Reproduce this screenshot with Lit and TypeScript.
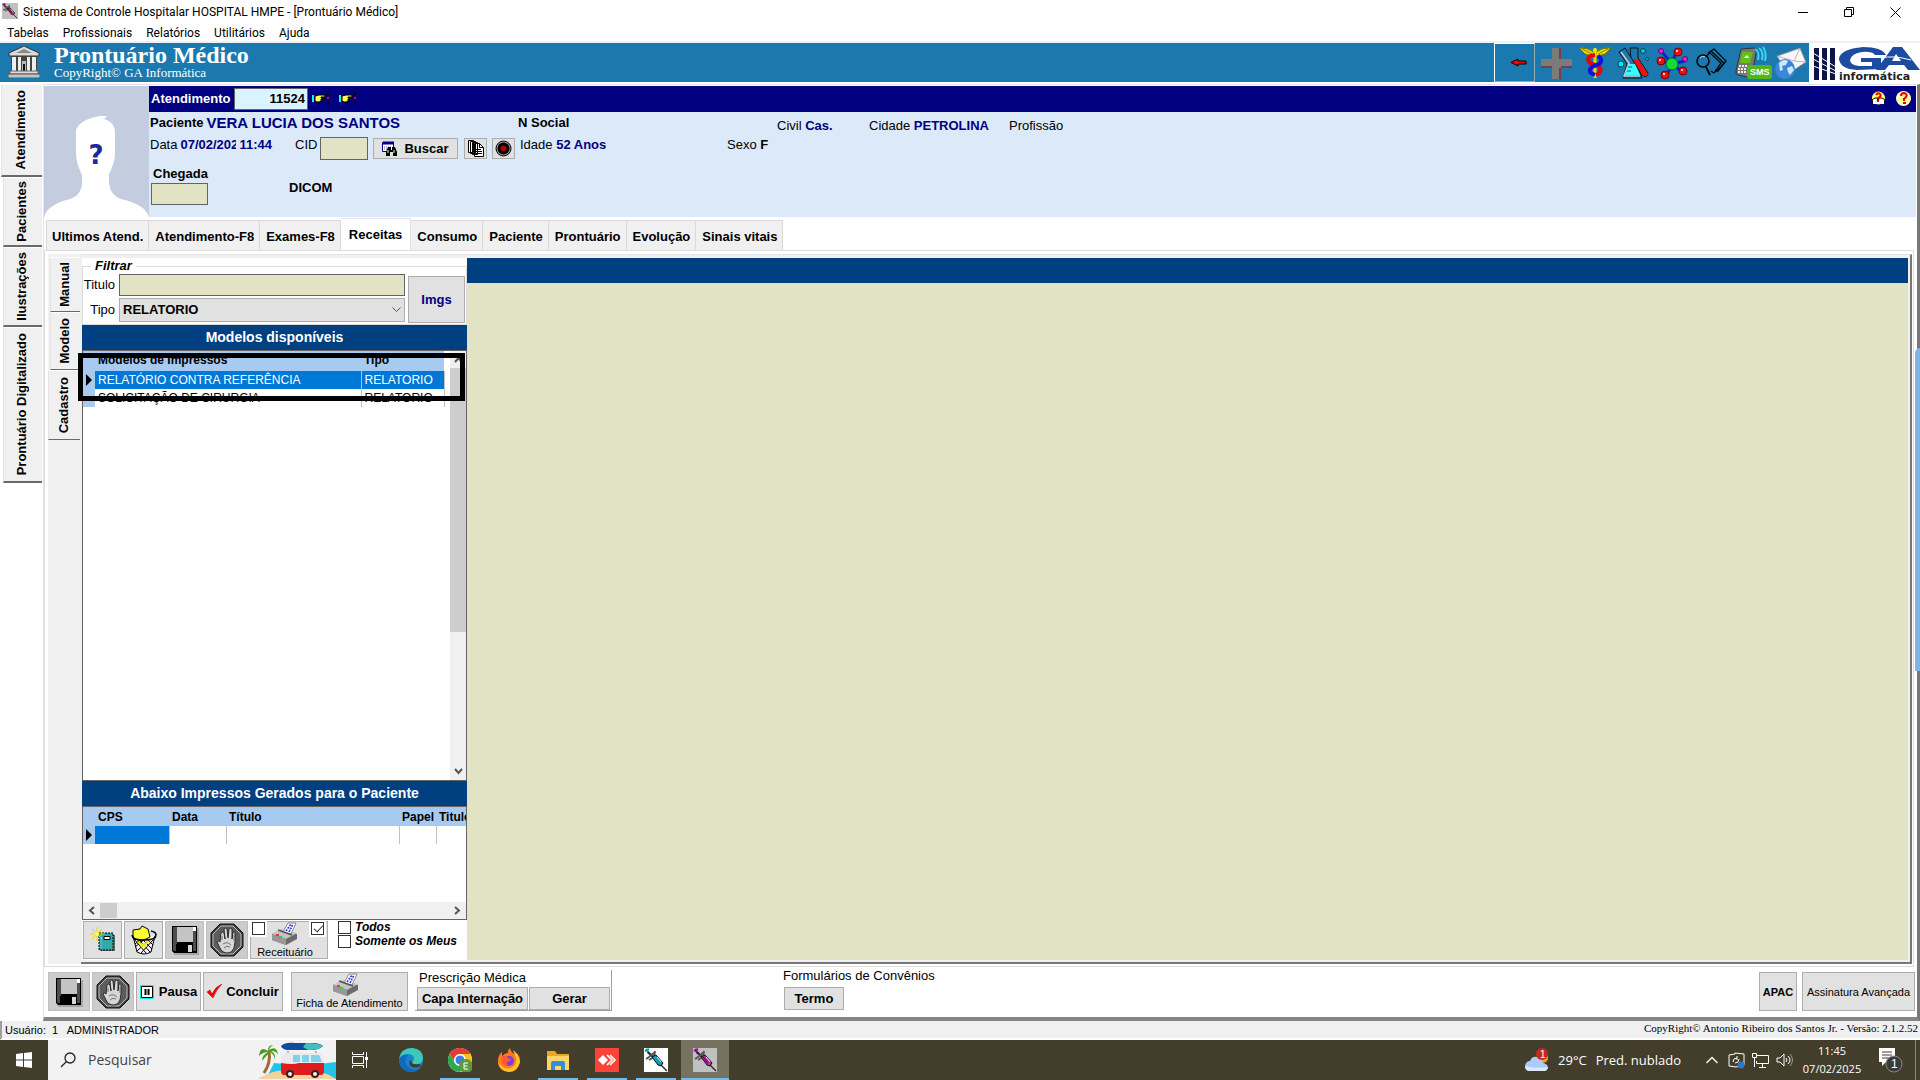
import { LitElement, html, css, svg } from "lit";
import { customElement, state } from "lit/decorators.js";
import { classMap } from "lit/directives/class-map.js";

const syringe = (a: string, b: string, bg: string) => html`<svg class="fill" viewBox="0 0 24 24" aria-hidden="true">
  <rect width="24" height="24" fill=${bg} />
  <path d="M1 3l4-2M2 1l3 5" stroke=${a} stroke-width="2" />
  <path d="M4 4l5 5" stroke="#222" stroke-width="2" />
  <path d="M2 11l3-2 6-5M11 3l-1 6-5 3" stroke="#555" stroke-width="2" fill="none" />
  <path d="M8 9l4-2 7 8-2 3-3-1z" fill=${b} stroke="#111" />
  <path d="M10 9l5 6" stroke=${a} stroke-width="2" />
  <path d="M13 9l4 5" stroke="#e8f4ff" />
  <path d="M17 17l6 6" stroke="#222" stroke-width="1.3" />
</svg>`;

const floppy = html`<svg width="28" height="30" viewBox="0 0 28 30" aria-hidden="true">
  <path d="M3 3h25v27H3z" fill="#a5a5a5" />
  <path d="M1 1h25v27H3l-2-2z" fill="#000" />
  <path d="M2 2h4v24H3l-1-1zM22 6h3v20h-3z" fill="#4d4d4d" />
  <path d="M6 2h16v15H6z" fill="#c4c4c4" /><path d="M22 2h3v4h-3z" fill="#fff" />
  <path d="M5 19h17v9H5z" fill="#000" /><path d="M17 20h4v7h-4z" fill="#d8d8d8" />
</svg>`;

const stopHand = html`<svg width="34" height="34" viewBox="0 0 34 34" aria-hidden="true">
  <path d="M10 1h14l9 9v14l-9 9H10l-9-9V10z" fill="#3d3d3d" stroke="#111" />
  <path d="M11 3h12l8 8v12l-8 8H11l-8-8V11z" fill="#5c5c5c" stroke="#bdbdbd" />
  <path d="M10 19l1-9q1-2 3 0l1 6-1-10q2-2 3 0l1 9 1-9q2-2 3 0v10l1-7q2-1 2 1v9l-1 6q-2 5-6 5-6 0-8-5l-3-6q1-2 3 0z" fill="#d6d6d6" stroke="#2b2b2b" />
  <path d="M13 21q4-3 8 1M14 25q3-3 6-1M12 13v4M24 12v6" stroke="#777" fill="none" />
</svg>`;

const printer = html`<svg class="prn" width="28" height="24" viewBox="0 0 28 24" aria-hidden="true">
  <path d="M1 12l10-4 15 4v5l-11 6-14-5z" fill="#6b6b6b" />
  <path d="M1 12l9-5 16 4-11 6z" fill="#c4c4c4" /><path d="M1 12l14 5v6L1 18z" fill="#989898" />
  <path d="M12 10L17 1h8l-5 11z" fill="#fff" stroke="#888" /><path d="M15 9l5-7M18 10l4-8" stroke="#2b35d8" stroke-width="1.6" stroke-dasharray="2 1" />
  <path d="M7 8l14 5" stroke="#555" stroke-width="1.5" />
  <path d="M5 13h3" stroke="#e33" stroke-width="2" /><path d="M8 15h3" stroke="#3c3" stroke-width="2" />
</svg>`;

const hand = html`<svg width="17" height="13" viewBox="0 0 17 13" aria-hidden="true">
  <path d="M0 3h2v7H0z" fill="#0ff" />
  <path d="M3 4l4-1h6v2H9v1h2v1H9v1h1v1H8v1H5L3 9z" fill="#ff5" stroke="#000" />
  <path d="M15 0h2v3h-2zM15 9h2v3h-2z" fill="#000" /><path d="M15 5h2v2h-2z" fill="#f00" />
</svg>`;

const bank = html`<svg width="32" height="32" viewBox="0 0 32 32" aria-hidden="true">
  <path d="M16 0l15 7v3H1V7z" fill="#d9d9d9" stroke="#333" /><path d="M8 7l8-4 8 4z" fill="#888" />
  <path d="M3 10h26v16H3z" fill="#444" />
  <path d="M4 11h4v14H4zM10 11h3v14h-3zM19 11h3v14h-3zM24 11h4v14h-4z" fill="#eee" />
  <path d="M14 15h4v10h-4z" fill="#b9b9b9" /><path d="M15 18h2v7h-2z" fill="#111" />
  <path d="M2 25h28v3H2z" fill="#ddd" stroke="#666" /><path d="M0 28h32v4H0z" fill="#c4c4c4" stroke="#555" />
</svg>`;

const tools: Array<[string, unknown]> = [
  ["Emergência", svg`<path d="M12 1h9v11h11v9H21v11h-9V21H1v-9h11z" fill="#7b7b7b"/><path d="M20 1v11M20 21v11M1 20h11M21 20h11" stroke="#7c0000"/>`],
  ["Medicina", svg`<path d="M15 9Q9 8 6 7L0 1q8-1 15 4zM17 9q6-1 9-2l6-6q-8-1-15 4z" fill="#e8e000" stroke="#776c00"/><path d="M3 2l10 5M29 2l-10 5" stroke="#887e00"/><path d="M16 3v28" stroke="#e8d800" stroke-width="3"/><circle cx="16" cy="3" r="2" fill="#ffe800"/>
    <path d="M16 8q-9 1-6 7 1 2 7 3 6 2 4 7-1 2-4 3" fill="none" stroke="#e00" stroke-width="4"/><path d="M19 9q6 4 1 8l-7 3q-4 3-1 6l4 2" fill="none" stroke="#11d" stroke-width="4"/>`],
  ["Laboratório", svg`<circle cx="3" cy="17" r="3" fill="#0ee" stroke="#045"/><circle cx="25" cy="4" r="2.5" fill="#0cc" stroke="#045"/><circle cx="29" cy="12" r="1.5" fill="#0cc" stroke="#045"/>
    <path d="M12 1h8v10l10 15q0 5-5 3L13 12z" fill="#1c79af" stroke="#111"/><path d="M13 13l7-1 10 15q-1 3-5 2z" fill="#e11"/>
    <path d="M1 5l6-4 14 22 3 8H5l4-14z" fill="#1c79af" stroke="#111"/><path d="M3 5l8 11-5 13h16" stroke="#ccc" stroke-width="1.5" fill="none"/><path d="M11 17h6l5 11H7z" fill="#3ff"/><path d="M10 20h4M9 24h4" stroke="#067"/>`],
  ["Exames", svg`<path d="M5 5l10 12M19 6l-4 10M4 14l12 3M15 17l13-3M15 18l-6 11M16 18l11 8" stroke="#12c" stroke-width="3"/><circle cx="15" cy="17" r="6" fill="#1d3" stroke="#063"/>
    <g fill="#e11" stroke="#700"><circle cx="4" cy="14" r="4"/><circle cx="21" cy="5" r="4"/><circle cx="8" cy="28" r="4"/><circle cx="26" cy="24" r="4"/></g><g fill="#e2c" stroke="#607"><circle cx="4" cy="4" r="2.5"/><circle cx="28" cy="12" r="2.5"/></g><g fill="#fff"><circle cx="3" cy="13" r="1"/><circle cx="20" cy="4" r="1"/><circle cx="7" cy="27" r="1"/><circle cx="25" cy="23" r="1"/></g>`],
  ["Pesquisar", svg`<circle cx="7" cy="14" r="6" fill="none" stroke="#000" stroke-width="1.5"/><path d="M10 20l4 8" stroke="#000" stroke-width="2"/><path d="M4 11q2-3 5-1" stroke="#cde" fill="none"/><path d="M12 6l6-4 12 12-8 10-3-1M10 9l4-3 11 10-7 10-3-2M15 4l13 12-8 9" fill="none" stroke="#000" stroke-width="1.2"/>`],
  ["SMS", svg`<path d="M6 2l13-1q3 0 2 5l-4 22q-1 3-5 2L3 28q-3-1-2-4z" fill="#777" stroke="#333"/><path d="M7 5h11l-3 11H5z" fill="#5dc417"/><path d="M9 11l3-3 2 3z" fill="#fff"/><path d="M4 19h9M3 22h9M3 25h8" stroke="#eee" stroke-width="2" stroke-dasharray="2 1"/><path d="M20 2q5 3 3 11M24 1q5 4 3 12M28 0q4 5 2 14" stroke="#35d7ee" stroke-width="2" fill="none"/><rect x="12" y="18" width="25" height="14" rx="3" fill="#53b51c"/><text x="15" y="28" font-family="Liberation Sans" font-size="9" font-weight="bold" fill="#fff">SMS</text>`],
  ["E-mail", svg`<path d="M3 9L26 1l6 14-18 12z" fill="#f7f7fa" stroke="#888"/><path d="M3 9l17 5 6-13M20 14l12 1" stroke="#b5b5c0" fill="none"/><circle cx="11" cy="22" r="10" fill="#3a86d8"/><path d="M5 16q4-5 9-2l-2 4-4 1 1 4-3 1zM13 21l5-2 2 4-4 5-2-3z" fill="#cfe6fa"/>`],
];

const gaLogo = html`<svg class="logo" width="111" height="39" viewBox="0 0 111 39" role="img" aria-label="GA informática">
  <rect width="111" height="39" fill="#fff" />
  <path d="M5 5h5v32H5zM13 5h5v32h-5zM21 5h5v32h-5z" fill="#0c1546" />
  <path d="M4 10l23 14M4 16l23 12M4 23l23 8" stroke="#fff" />
  <path d="M77 12Q73 4 54 4 31 6 30 16q1 10 18 11l24-1V15H52v4h11v4H50q-9-1-9-6 2-7 12-8 10-1 13 3z" fill="#1c4ba0" />
  <path d="M67 27L84 4h9l18 23H99l-4-5H80l-4 5zM83 18h9l-5-7z" fill="#1c4ba0" /><path d="M72 15q12-3 30 2" stroke="#fff" fill="none" />
  <text x="30" y="37" font-family="DejaVu Sans" font-size="11" font-weight="bold" fill="#222">informática</text>
</svg>`;

@customElement("app-root")
export class AppRoot extends LitElement {
  @state() private tab = "Receitas";

  static styles = css`
    :host { display: flex; flex-direction: column; min-height: 100vh; background: #fff; color: #000; font: 13px/16px "Liberation Sans", Arial, sans-serif; overflow: hidden; position: relative; }
    * { box-sizing: border-box; }
    svg { display: block; flex: none; }
    button, input, select { font: inherit; color: inherit; margin: 0; border-radius: 0; }
    button { background: #e1e1e1; border: 1px solid #adadad; padding: 0; display: flex; align-items: center; justify-content: center; white-space: nowrap; }
    .fill { width: 100%; height: 100%; }
    .ui { font-family: "Open Sans", "Noto Sans", sans-serif; font-size: 12px; }
    .rb { font-family: Roboto, "Open Sans", sans-serif; font-size: 12px; }
    .titlebar { display: flex; align-items: center; height: 24px; padding: 0 2px; gap: 5px; }
    .titlebar .app { width: 16px; height: 16px; margin-bottom: 3px; }
    .titlebar h1 { font: inherit; margin: 0; flex: 1; }
    .win { display: flex; }
    .win button { background: none; border: 0; width: 46px; height: 22px; }
    .menu { display: flex; height: 19px; border-bottom: 2px solid #f0f0f0; padding-left: 7px; gap: 14px; line-height: 18px; }
    .menu a { color: #000; text-decoration: none; }
    .band { display: flex; height: 39px; background: #1c79af; color: #fff; font-family: "Liberation Serif", serif; }
    .band .bank { padding: 3px 14px 0 8px; }
    .names { flex: 1; }
    .names h2 { margin: 0; font-size: 24px; line-height: 24px; font-weight: bold; }
    .names p { margin: 0; font-size: 13px; line-height: 12px; }
    .tools { display: flex; gap: 7px; align-items: center; padding-right: 3px; }
    .tools button { background: none; border: 0; width: 32px; height: 39px; }
    .tools svg { overflow: visible; }
    .tools .back { width: 41px; border: 1px solid #fff; border-right-color: #9aa; border-bottom-color: #9aa; margin-right: -2px; padding-left: 8px; }
    .work { flex: 1; display: flex; min-height: 0; }
    .side { width: 43px; padding: 2px 1px 0 1px; display: flex; flex-direction: column; align-items: flex-end; }
    .vt { background: #f0f0f0; border: 0 solid #808080; border-bottom: 2px solid #696969; border-left: 1px solid #e3e3e3; border-top: 1px solid #fff; font-weight: bold; width: 39px; padding-right: 2px; }
    .vt span { writing-mode: vertical-rl; transform: rotate(180deg); }
    .side .vt:first-child { width: 41px; }
    .h92 { height: 93px; } .h70 { height: 70px; } .h80 { height: 80px; } .h156 { height: 156px; }
    .main { flex: 1; min-width: 0; display: flex; flex-direction: column; margin-top: 2px; padding: 1px 1px 0 0; border-top: 1px solid #e3e3e3; border-left: 1px solid #e3e3e3; border-right: 3px solid #777; border-bottom: 4px solid #848484; }
    .patient { display: flex; height: 131px; }
    .info { flex: 1; background: #dce9f9; }
    .navy { height: 26px; background: #000080; color: #fff; display: flex; align-items: center; font-weight: bold; padding: 0 5px 1px 2px; }
    .navy label { width: 83px; }
    .navy input { width: 74px; height: 22px; border: 1px solid #646464; background: #d9f3ff; color: #000; text-align: right; font-weight: bold; padding: 0 2px; margin-right: 4px; }
    .navy button { background: none; border: 0; width: 17px; height: 20px; margin-right: 10px; }
    .navy .sp { flex: 1; }
    .navy .help { width: 15px; }
    .navy .help:last-child { margin-right: 0; }
    .line { display: flex; padding-left: 1px; }
    .l1 { height: 25px; padding-top: 3px; }
    .l2 { height: 27px; }
    .l1 .low { padding-top: 3px; }
    .blue { color: #000080; font-weight: bold; }
    .w368 { width: 368px; display: flex; gap: 3px; } .w259 { width: 259px; } .w92 { width: 92px; } .w140 { width: 140px; } .w145 { width: 145px; display: flex; gap: 3px; } .w207 { width: 207px; }
    .name { font-size: 15px; }
    .b { font-weight: bold; }
    .date { width: 56px; overflow: hidden; white-space: nowrap; }
    .txt { background: #e2e3c5; border: 1px solid #646464; }
    .cidl { width: 25px; }
    .cid { width: 48px; height: 23px; margin-right: 5px; }
    .buscar { width: 85px; height: 21px; gap: 6px; font-weight: bold; margin: 1px 6px 0 0; }
    .mini { width: 23px; height: 21px; margin: 1px 5px 0 0; }
    .l3 { gap: 81px; padding: 1px 0 0 2px; }
    .cheg { display: flex; flex-direction: column; font-weight: bold; }
    .cheg label { padding-left: 2px; line-height: 18px; }
    .cheg input { width: 57px; height: 22px; }
    .dicom { padding-top: 15px; font-weight: bold; }
    .tabs { display: flex; align-items: flex-end; height: 33px; padding-left: 2px; }
    .tabs button { background: #f0f0f0; border: 1px solid #d9d9d9; border-left-width: 0; border-bottom: 0; height: 30px; padding: 2px 5px 0 6px; font-weight: bold; }
    .tabs button:first-child { border-left-width: 1px; padding-left: 5px; }
    .tabs button.on { background: #fff; height: 33px; padding: 0 8px; margin-bottom: -1px; border-color: #e3e3e3; }
    .page { flex: 1; display: flex; border: 1px solid #dcdcdc; margin: 0 2px 1px 0; padding: 3px 1px 2px 3px; min-height: 0; }
    .strip { width: 33px; background: #f0f0f0; padding: 3px 1px 0; display: flex; flex-direction: column; align-items: flex-end; }
    .strip .vt { width: 30px; border-bottom-width: 1px; }
    .strip .vt:last-child { width: 32px; }
    .h55 { height: 55px; } .h58 { height: 58px; }
    .inner { flex: 1; display: flex; background: #f0f0f0; border-top: 1px solid #e3e3e3; border-right: 2px solid #777; border-bottom: 2px solid #777; padding: 3px 2px 2px 1px; min-height: 0; }
    .left { width: 385px; background: #fff; display: flex; flex-direction: column; }
    fieldset { margin: 0; padding: 0; border: 1px solid #dcdcdc; display: block; min-width: 0; }
    legend { margin-left: 8px; padding: 0 4px; font-weight: bold; font-style: italic; }
    .filter { display: flex; gap: 3px; padding-bottom: 1px; }
    .fields { display: grid; grid-template-columns: 36px 1fr; grid-template-rows: 22px 24px; row-gap: 2px; width: 322px; align-items: center; }
    .fields label { text-align: right; padding-right: 4px; }
    .fields .txt { height: 22px; width: 100%; }
    .sel { position: relative; }
    .sel select { appearance: none; width: 100%; height: 24px; background: #e1e1e1; border: 1px solid #adadad; font-weight: bold; padding: 0 3px; display: block; }
    .sel svg { position: absolute; right: 4px; top: 9px; pointer-events: none; }
    .imgs { width: 57px; height: 47px; margin-top: 2px; font-weight: bold; color: #000080; }
    .cap { background: #004080; color: #fff; font-weight: bold; text-align: center; line-height: 25px; height: 25px; margin: 0; font-size: 14px; }
    .grid { position: relative; border: 1px solid #646464; display: flex; }
    .g1 { flex: 1; }
    .g2 { height: 114px; flex-direction: column; overflow: hidden; }
    table { border-collapse: collapse; table-layout: fixed; }
    .g1 table { width: 361px; align-self: flex-start; }
    .g2 table { width: 419px; flex: none; }
    th, td { padding: 0 0 0 3px; height: 18px; text-align: left; white-space: nowrap; overflow: hidden; line-height: 16px; font-size: 12px; border-right: 1px solid #c0c0c0; }
    thead th, tbody th { background: #a6caf0; border-right: 0; }
    thead th { height: 19px; }
    .g1 thead th { height: 20px; padding-bottom: 2px; }
    tbody th { padding: 0; }
    tr.on td { background: #0078d7; color: #fff; }
    td.cur { background: #0078d7; }
    .c0 { width: 12px; } .c1 { width: 266px; } .c2 { width: 83px; }
    .d1 { width: 74px; } .d2 { width: 57px; } .d3 { width: 173px; } .d4 { width: 37px; } .d5 { width: 66px; }
    .vs { margin-left: auto; width: 16px; background: #f0f0f0; display: flex; flex-direction: column; align-items: center; padding: 5px 0 4px; }
    .vs .thumb { width: 16px; height: 264px; background: #cdcdcd; margin: 3px 0 auto; }
    .hs { margin-top: auto; height: 17px; background: #f0f0f0; display: flex; align-items: center; padding: 0 5px 1px; }
    .hs .thumb { width: 17px; height: 15px; background: #cdcdcd; margin: 0 auto 0 3px; }
    .mark { position: absolute; left: -5px; top: 2px; width: 387px; height: 48px; border: 5px solid #000; pointer-events: none; }
    .acts { display: flex; gap: 2px; height: 40px; padding: 1px 0 0 1px; }
    .acts button { width: 39px; height: 38px; }
    .acts button:disabled, .foot button:disabled { background: #ccc; border-color: #bfbfbf; }
    .acts .stop { width: 42px; }
    .rec { position: relative; width: 78px; }
    .acts .rec button { width: 78px; padding-right: 8px; }
    .acts .print, .foot .print { flex-direction: column; justify-content: flex-start; font-size: 11px; line-height: 13px; }
    .foot .prn { margin-right: 8px; }
    .rec .o { position: absolute; top: 0; background: #fff; padding: 1px 2px 2px; line-height: 0; }
    .rec .a { left: 0; } .rec .z { right: 2px; }
    .opts { display: flex; flex-direction: column; font-weight: bold; font-style: italic; font-size: 12px; padding-left: 8px; margin-top: -1px; }
    .opts label { display: flex; gap: 4px; align-items: center; height: 14px; }
    input[type="checkbox"] { appearance: none; width: 13px; height: 13px; border: 1px solid #333; background: #fff; position: relative; display: block; flex: none; }
    input[type="checkbox"]:checked::before { content: ""; position: absolute; left: 4px; top: 0; width: 4px; height: 8px; border: solid #333; border-width: 0 1px 1px 0; transform: rotate(42deg); }
    .right { flex: 1; background: #e2e3c5; }
    .right .bar { height: 25px; background: #004080; }
    .foot { height: 49px; padding: 4px 1px 0 4px; display: flex; gap: 2px; }
    .foot button { height: 39px; font-weight: bold; }
    .foot .sq { width: 42px; }
    .foot .pausa { width: 65px; gap: 5px; } .foot .conc { width: 80px; gap: 3px; }
    .foot .print { width: 117px; margin: 0 5px 0 6px; font-weight: normal; }
    .presc { width: 197px; height: 41px; margin-top: -2px; border-right: 1px solid #a0a0a0; border-bottom: 1px solid #a0a0a0; padding: 0 1px 0 2px; }
    .presc p, .forms p { margin: 0; height: 17px; line-height: 15px; padding-left: 2px; }
    .presc div { display: flex; gap: 1px; }
    .foot .presc button { flex: 1 1 81px; height: 23px; }
    .foot .presc button:first-child { flex: 1 1 111px; }
    .forms { margin: -4px 0 0 169px; flex: 1; }
    .forms p { height: 19px; padding: 0; }
    .foot .forms button { width: 60px; height: 23px; margin-left: 1px; }
    .foot .apac { width: 38px; font-size: 11px; margin-right: 3px; }
    .foot .ass { width: 113px; font-size: 11px; font-weight: normal; }
    .status { display: flex; justify-content: space-between; height: 19px; background: #f0f0f0; border-bottom: 2px solid #fff; border-left: 2px solid #a0a0a0; padding: 0 2px 0 3px; font-size: 11px; line-height: 18px; }
    .status .serif { font-family: "Liberation Serif", serif; line-height: 15px; }
    .status .u { white-space: pre; }
    .task { height: 40px; background: #433d2b; color: #fff; display: flex; align-items: stretch; }
    .task button { background: none; border: 0; width: 48px; }
    .search { width: 288px; background: #f2f2f2; display: flex; align-items: center; padding-left: 12px; gap: 12px; }
    .search input { flex: 1; min-width: 0; border: 0; background: none; padding: 0; font-size: 14px; color: #444; }
    .search input::placeholder { color: #444; opacity: 1; }
    .pins { display: flex; padding-left: 3px; }
    .task .pin { width: 40px; margin: 0 5px 0 4px; border-bottom: 2px solid transparent; padding-top: 2px; }
    .task .run { border-bottom-color: #76b9ed; }
    .task .act { width: 48px; margin: 0; background: #77725f; }
    .pin .i { width: 24px; height: 24px; }
    .tray { margin-left: auto; display: flex; align-items: center; font-size: 13px; }
    .tray .temp { margin: 0 9px 0 8px; }
    .tray .chev { margin: 0 10px 0 25px; }
    .tray .m7 { margin-right: 7px; }
    .clock { width: 78px; text-align: center; font-size: 11px; line-height: 18px; }
    .tray .note { margin: 0 12px 0 7px; }
    .show { border-left: 1px solid #8b8779; width: 5px; height: 40px; }
    .edge { position: absolute; right: 0; top: 348px; width: 5px; height: 323px; border-radius: 5px 0 0 0; background: #80b2eb; }
  `;

  private chev(d: string) {
    return html`<svg width="9" height="9" viewBox="0 0 9 9" aria-hidden="true"><path d=${d} fill="none" stroke="#555" stroke-width="2" /></svg>`;
  }

  private vtab(label: string, cls: string) {
    return html`<button class="vt ${cls}"><span>${label}</span></button>`;
  }

  private arrow() {
    return html`<svg width="12" height="12" viewBox="0 0 12 12" aria-hidden="true"><path d="M3 0l6 6-6 6z" fill="#000" /></svg>`;
  }

  render() {
    const tabs = ["Ultimos Atend.", "Atendimento-F8", "Exames-F8", "Receitas", "Consumo", "Paciente", "Prontuário", "Evolução", "Sinais vitais"];
    return html`
      <header class="titlebar rb">
        <div class="app">${syringe("#808", "#a2355f", "#c0c0c0")}</div>
        <h1>Sistema de Controle Hospitalar HOSPITAL HMPE - [Prontuário Médico]</h1>
        <div class="win">
          <button aria-label="Minimizar"><svg width="10" height="10"><path d="M0 5h10v1H0z" /></svg></button>
          <button aria-label="Restaurar"><svg width="10" height="10" fill="none" stroke="#000"><path d="M.5 2.5h7v7h-7zM2.5 2.5v-2h7v7h-2" /></svg></button>
          <button aria-label="Fechar"><svg width="11" height="11" stroke="#000"><path d="M.5.5l10 10M10.5.5l-10 10" /></svg></button>
        </div>
      </header>
      <nav class="menu rb">${["Tabelas", "Profissionais", "Relatórios", "Utilitários", "Ajuda"].map((m) => html`<a href="#">${m}</a>`)}</nav>
      <div class="band">
        <div class="bank">${bank}</div>
        <div class="names"><h2>Prontuário Médico</h2><p>CopyRight© GA Informática</p></div>
        <div class="tools">
          <button class="back" aria-label="Voltar"><svg width="16" height="9" viewBox="0 0 16 9"><path d="M0 4.5L7 1v2h8v3H7v2z" fill="#f00" stroke="#000" /></svg></button>
          ${tools.map(([n, i]) => html`<button aria-label=${n}><svg width="32" height="32" viewBox="0 0 32 32">${i}</svg></button>`)}
        </div>
        ${gaLogo}
      </div>
      <div class="work">
        <nav class="side">
          ${this.vtab("Atendimento", "h92")}${this.vtab("Pacientes", "h70")}${this.vtab("Ilustrações", "h80")}${this.vtab("Prontuário Digitalizado", "h156")}
        </nav>
        <main class="main">
          <section class="patient">
            <svg width="105" height="131" viewBox="0 0 105 131" role="img" aria-label="Foto do paciente">
              <rect width="105" height="132" fill="#c4cde0" />
              <path d="M0 132Q2 119 26 113q12-4 12-17V89Q32 77 32 67V44Q36 33 56 30l7 0-3 3q12 3 11 16v18q0 10-6 21v9q1 12 12 16 26 6 28 19z" fill="#fff" />
              <text x="52" y="78" text-anchor="middle" font-family="DejaVu Sans" font-weight="bold" font-size="26" fill="#1a2a9c">?</text>
            </svg>
            <div class="info">
              <div class="navy">
                <label for="at">Atendimento</label><input id="at" value="11524" />
                <button aria-label="Anterior">${hand}</button><button aria-label="Próximo">${hand}</button>
                <span class="sp"></span>
                <button class="help" aria-label="Manual"><svg width="15" height="15" viewBox="0 0 15 15"><circle cx="7.5" cy="7" r="6.5" fill="#ff6" /><path d="M1 14V9l3-2h2l1 3 1-3h3l3 2v5" fill="none" stroke="#111" /><path d="M2 13V9l3-1 2 3 3-3 3 1v4z" fill="#fff" /><path d="M5 4q2-3 4-1 2 2-2 4v1M7 9v2" stroke="#e00" stroke-width="2" fill="none" /></svg></button>
                <button class="help" aria-label="Ajuda"><svg width="15" height="15" viewBox="0 0 15 15"><circle cx="7.5" cy="7.5" r="7.5" fill="#ffd" /><circle cx="7.5" cy="7.5" r="6.5" fill="#ff9" /><path d="M5 5q0-3 3-3 4 1 2 4l-2 2v2M7 12h3" stroke="#e00" stroke-width="2" fill="none" /></svg></button>
              </div>
              <div class="line l1">
                <span class="w368"><span class="b">Paciente</span><span class="blue name">VERA LUCIA DOS SANTOS</span></span>
                <span class="w259 b">N Social</span>
                <span class="w92 low">Civil <span class="blue">Cas.</span></span>
                <span class="w140 low">Cidade <span class="blue">PETROLINA</span></span>
                <span class="low">Profissão</span>
              </div>
              <div class="line l2">
                <span class="w145"><span>Data</span><span class="blue date">07/02/2025</span><span class="blue">11:44</span></span>
                <label class="cidl" for="cid">CID</label><input id="cid" class="txt cid" />
                <button class="buscar"><svg width="16" height="16" viewBox="0 0 16 16"><path d="M.5 1.5h11v9H.5z" fill="#fff" stroke="#008" /><path d="M1 2h11" stroke="#008" stroke-width="3" /><path d="M2 6h8M2 8h8" stroke="#77a" stroke-dasharray="1 1" /><path d="M4 15v-4l2-5h3v3h1V6h3l2 5v4h-4v-4H8v4z" /><path d="M6 9v3M12 9v3" stroke="#fff" /></svg>Buscar</button>
                <button class="mini" aria-label="Copiar"><svg width="16" height="17" viewBox="0 0 16 17"><path d="M.5.5h5v12h-5zM2.5 1.5h5v12h-5zM4.5 2.5h5v12h-5zM6.5 3.5h5l4 4v9h-9z" fill="#fff" stroke="#000" /><path d="M11.5 3.5v4h4M8 9.5h5M8 11.5h6M8 13.5h6" fill="none" stroke="#000" /></svg></button>
                <button class="mini" aria-label="Gravar"><svg width="17" height="17" viewBox="0 0 17 17"><circle cx="8.5" cy="8.5" r="7.5" fill="#999" stroke="#000" /><circle cx="8.5" cy="8.5" r="6" /><circle cx="8.5" cy="8.5" r="3" fill="#a00" /></svg></button>
                <span class="w207">Idade <span class="blue">52 Anos</span></span>
                <span>Sexo <span class="b">F</span></span>
              </div>
              <div class="line l3">
                <div class="cheg"><label for="ch">Chegada</label><input id="ch" class="txt" /></div>
                <span class="dicom">DICOM</span>
              </div>
            </div>
          </section>
          <nav class="tabs">${tabs.map((t) => html`<button class=${classMap({ on: t === this.tab })} @click=${() => (this.tab = t)}>${t}</button>`)}</nav>
          <section class="page">
            <nav class="strip">${this.vtab("Manual", "h55")}${this.vtab("Modelo", "h58")}${this.vtab("Cadastro", "h70")}</nav>
            <div class="inner">
              <div class="left">
                <fieldset>
                  <legend>Filtrar</legend>
                  <div class="filter">
                    <div class="fields">
                      <label for="ti">Titulo</label><input id="ti" class="txt" />
                      <label for="tp">Tipo</label>
                      <div class="sel"><select id="tp"><option>RELATORIO</option></select><svg width="9" height="6" viewBox="0 0 9 6"><path d="M.5.5l4 4 4-4" fill="none" stroke="#555" /></svg></div>
                    </div>
                    <button class="imgs">Imgs</button>
                  </div>
                </fieldset>
                <h3 class="cap">Modelos disponíveis</h3>
                <div class="grid g1">
                  <table>
                    <colgroup><col class="c0" /><col class="c1" /><col class="c2" /></colgroup>
                    <thead><tr><th></th><th>Modelos de Impressos</th><th>Tipo</th></tr></thead>
                    <tbody>
                      <tr class="on"><th>${this.arrow()}</th><td>RELATÓRIO CONTRA REFERÊNCIA</td><td>RELATORIO</td></tr>
                      <tr><th></th><td>SOLICITAÇÃO DE CIRURGIA</td><td>RELATORIO</td></tr>
                    </tbody>
                  </table>
                  <div class="vs">${this.chev("M1 6l3.5-4L8 6")}<div class="thumb"></div>${this.chev("M1 2l3.5 4L8 2")}</div>
                  <div class="mark"></div>
                </div>
                <h3 class="cap">Abaixo Impressos Gerados para o Paciente</h3>
                <div class="grid g2">
                  <table>
                    <colgroup><col class="c0" /><col class="d1" /><col class="d2" /><col class="d3" /><col class="d4" /><col class="d5" /></colgroup>
                    <thead><tr><th></th><th>CPS</th><th>Data</th><th>Título</th><th>Papel</th><th>Titulo</th></tr></thead>
                    <tbody><tr><th>${this.arrow()}</th><td class="cur"></td><td></td><td></td><td></td><td></td></tr></tbody>
                  </table>
                  <div class="hs">${this.chev("M6 1L2 4.5 6 8")}<div class="thumb"></div>${this.chev("M3 1l4 3.5L3 8")}</div>
                </div>
                <div class="acts">
                  <button aria-label="Novo"><svg width="26" height="26" viewBox="0 0 26 26"><path d="M11 8h14v16H11z" fill="#666" /><path d="M9 6h14v17H9z" fill="#3aa" stroke="#000" stroke-dasharray="2 1" /><path d="M11 8v14" stroke="#9dd" stroke-dasharray="1 1" /><path d="M14 9.5h6v3h-6z" fill="#fff" stroke="#000" /><path d="M2 2l10 10M12 2L2 12M7 0v14M0 7h14" stroke="#e8d800" /><circle cx="7" cy="7" r="2" fill="#ff6" /></svg></button>
                  <button aria-label="Excluir"><svg width="28" height="30" viewBox="0 0 28 30"><path d="M3 11l4 16q7 4 14 0l4-16" fill="#f4f4f4" stroke="#000" /><path d="M3 11V5l7-1 2-3 6 3 2 8-8 4-8-2z" fill="#ff3" stroke="#000" /><path d="M4 14l12 14M8 14l12 13M13 15l9 9M18 15l5 5M24 14L11 28M20 14L7 26M15 14L5 22M10 15l-5 4" stroke="#000" /><path d="M8 17l8 5M19 16l-8 6" stroke="#ee0" stroke-width="2" /><path d="M2 10q0 5 12 5t12-5q0-3-5-4" fill="none" stroke="#000" stroke-width="1.5" /></svg></button>
                  <button disabled aria-label="Salvar">${floppy}</button>
                  <button disabled class="stop" aria-label="Cancelar">${stopHand}</button>
                  <div class="rec">
                    <button class="print">${printer}Receituário</button>
                    <span class="o a"><input type="checkbox" aria-label="Opção" /></span><span class="o z"><input type="checkbox" checked aria-label="Imprimir" /></span>
                  </div>
                  <div class="opts"><label><input type="checkbox" />Todos</label><label><input type="checkbox" />Somente os Meus</label></div>
                </div>
              </div>
              <div class="right"><div class="bar"></div></div>
            </div>
          </section>
          <footer class="foot">
            <button disabled class="sq" aria-label="Salvar">${floppy}</button>
            <button disabled class="sq" aria-label="Cancelar">${stopHand}</button>
            <button class="pausa"><svg width="14" height="14" viewBox="0 0 14 14"><path d="M.5.5h13v13H.5z" fill="#fff" stroke="#0ee" /><path d="M1.5 1.5h11v11h-11z" fill="none" stroke="#000" /><path d="M5.5 4v6M8.5 4v6" stroke="#000" stroke-width="2" /></svg>Pausa</button>
            <button class="conc"><svg width="16" height="15" viewBox="0 0 16 15"><path d="M0 8l3-2 2 4q4-8 10-10-6 6-9 14z" fill="#f00" stroke="#900" stroke-width=".5" /></svg>Concluir</button>
            <button class="print">${printer}Ficha de Atendimento</button>
            <div class="presc"><p>Prescrição Médica</p><div><button>Capa Internação</button><button>Gerar</button></div></div>
            <div class="forms"><p>Formulários de Convênios</p><button>Termo</button></div>
            <button class="apac">APAC</button>
            <button class="ass">Assinatura Avançada</button>
          </footer>
        </main>
      </div>
      <div class="status"><span class="u">Usuário:  1   ADMINISTRADOR</span><span class="serif">CopyRight© Antonio Ribeiro dos Santos Jr. - Versão: 2.1.2.52</span></div>
      <div class="task ui">
        <button aria-label="Iniciar"><svg width="16" height="16" fill="#fff"><path d="M0 2l7-1v6.5H0zM8 1l8-1v7.5H8zM0 8.5h7V15l-7-1zM8 8.5h8V16l-8-1z" /></svg></button>
        <div class="search">
          <svg width="16" height="16" fill="none" stroke="#222" stroke-width="1.3"><circle cx="10" cy="6" r="5" /><path d="M6.5 9.5L1 15" /></svg>
          <input placeholder="Pesquisar" aria-label="Pesquisar" />
          <svg width="80" height="38" viewBox="0 0 80 38" aria-hidden="true">
            <path d="M18 22q30 4 62-1v17H10z" fill="#20c4e4" /><path d="M2 38q14-10 40-10 24 0 38 10z" fill="#f3d29b" />
            <path d="M13 10q2 12-5 22" stroke="#a06a32" stroke-width="3" fill="none" /><path d="M12 10Q4 4 3 15q4-4 9-4-6 3-6 9 5-6 8-9 5 3 5 9 1-8-4-10 6 0 7 4Q21 4 13 9q2-5 5-5-6-1-6 6z" fill="#4a9c1c" />
            <path d="M25 5q4-4 14-3h20q6 1 8 3-4 4-12 4H31q-5-1-6-4z" fill="#0b4f9c" /><path d="M50 2q13 0 17 3-4 4-15 4l-5-3z" fill="#3fc1bd" /><path d="M32 10v3M60 10v3" stroke="#777" />
            <path d="M30 12h33q5 1 5 9v10H25V20q1-8 5-8z" fill="#e9e9ee" /><path d="M25 22q12 2 18 0h25v10q-1 2-3 2H27q-2-1-2-3z" fill="#dd1c1f" />
            <path d="M37 14h7v7h-7zM46 14h7v7h-7zM55 14h8l3 7H55z" fill="#7fd2ec" /><circle cx="34" cy="33" r="4" fill="#3a2222" /><circle cx="59" cy="33" r="4" fill="#3a2222" /><circle cx="34" cy="33" r="2" fill="#eee" /><circle cx="59" cy="33" r="2" fill="#eee" />
          </svg>
        </div>
        <button aria-label="Visão de tarefas"><svg width="17" height="16" fill="none" stroke="#fff"><path d="M.5 0v2.5h11V0M.5 4.5h11v7H.5zM.5 16v-2.5h11V16M14.5 0v5M14.5 8v8" /><path d="M13 5h3v3h-3z" fill="#fff" stroke="none" /></svg></button>
        <div class="pins">
        ${this.pin("Edge", false, svg`<circle cx="12" cy="12" r="12" fill="#1686cf"/><path d="M0 11Q2 0 13 0q11 1 11 10 0 6-7 6-4 0-4-2 2-1 2-4-1-4-6-4Q3 6 0 11z" fill="#3fc8b4"/><path d="M0 11q4-5 9-4-4 4-2 9 4 7 13 5-4 3-9 3Q1 23 0 11z" fill="#1469bd"/><path d="M13 14q-1 3 8 2l1 2q-4 3-9 1-4-2-2-7z" fill="#433d2b"/>`)}
        ${this.pin("Chrome", true, svg`<circle cx="12" cy="12" r="12" fill="#fff"/><path d="M1.6 6a12 12 0 0 1 20.8 0H12a6 6 0 0 0-5.2 9z" fill="#e33b2e"/><path d="M22.4 6A12 12 0 0 1 12 24l5.2-9A6 6 0 0 0 12 6z" fill="#fbc116"/><path d="M1.6 6A12 12 0 0 0 12 24l5.2-9a6 6 0 0 1-10.4 0z" fill="#2da94f"/><circle cx="12" cy="12" r="5" fill="#3f7de8" stroke="#fff"/><circle cx="18" cy="18" r="7" fill="#5d9a3b"/><path d="M20 15h-4v6h4M16 18h3.5" stroke="#fff" fill="none"/>`)}
        ${this.pin("Firefox", false, svg`<path d="M12 24Q0 23 1 11q1-5 4-7v4q3-3 6-3-1-2 2-5 1 5 6 7l1-2q4 5 3 9-2 10-11 10z" fill="#ff7a1c"/><path d="M16 2q6 4 7 12-2 9-11 10Q3 23 1 14q6 8 12 6 7-2 6-9-1-4-3-9z" fill="#ffc32b"/><circle cx="12" cy="13" r="5" fill="#7a3fe0"/><path d="M5 8q3-1 6 2l3 1q-1 3-4 3-1 4 3 4-7 1-8-5z" fill="#ff5a30"/>`)}
        ${this.pin("Explorador de Arquivos", true, svg`<path d="M1 3h8l2 3h12v16H1z" fill="#e9a824"/><path d="M1 8h22v14H1z" fill="#ffd567"/><path d="M5 22v-7q0-2 2-2h10q2 0 2 2v7h-4v-4H9v4z" fill="#2f8ede"/>`)}
        ${this.pin("AnyDesk", true, svg`<path d="M0 0h24v24H0z" fill="#fb4437"/><path d="M3 12l5-5 5 5-5 5z" fill="#fff"/><path d="M12 7l5 5-5 5M15 7l5 5-5 5" fill="none" stroke="#fff" stroke-width="1.5"/>`)}
        <button class="pin run" aria-label="Seringa"><div class="i">${syringe("#0aa", "#158bd0", "#fff")}</div></button>
        <button class="pin run act" aria-label="Sistema de Controle Hospitalar"><div class="i">${syringe("#909", "#a43c86", "#c0c0c0")}</div></button>
        </div>
        <div class="tray">
          <svg width="26" height="24" viewBox="0 0 26 24"><circle cx="19" cy="10" r="5" fill="#f59a23" /><path d="M6 23q-5 0-5-5 1-5 5-5 2-5 7-4 5 0 6 6 5 1 5 5-1 3-4 3z" fill="#a9cdf8" /><path d="M6 23q-5 0-5-5 8 3 23 1-1 4-4 4z" fill="#dbe9fd" /><circle cx="18" cy="6" r="6" fill="#c42b1c" /><text x="16" y="10" font-size="10" fill="#fff" font-family="Liberation Sans">1</text></svg>
          <span class="temp">29°C</span><span>Pred. nublado</span>
          <svg class="chev" width="12" height="8" fill="none" stroke="#fff" stroke-width="1.3"><path d="M.5 7L6 1.5 11.5 7" /></svg>
          <svg class="m7" width="17" height="17" fill="none" stroke="#fff"><path d="M1 3l6-1v-1l9 1v11l-8 2-7-1zM5 10q0-4 4-4M9 4v4M11 7q0 4-4 4" /><circle cx="13" cy="13" r="3.5" fill="#2c76c8" stroke="none" /></svg>
          <svg class="m7" width="17" height="15" fill="none" stroke="#fff"><path d="M5 2.5h11.5v8H4.5V8M.5.5h4v4h-4zM2.5 5v9M10.5 11v3M7 14.5h7" /></svg>
          <svg width="17" height="14" fill="none" stroke="#fff"><path d="M1 5h3l4-4v12L4 9H1zM10 5q2 2 0 4M12 3q4 4 0 8" /><path d="M14 1q5 6 0 12" stroke="#999" /></svg>
          <div class="clock">11:45<br />07/02/2025</div>
          <svg class="note" width="25" height="26"><path d="M1 1h16v14H8l-4 4v-4H1z" fill="#fff" /><path d="M4 5h10M4 8h10M4 11h7" stroke="#433d2b" /><circle cx="16" cy="17" r="8" fill="#3b3b3b" stroke="#888" /><text x="13" y="21" font-size="12" fill="#fff" font-family="Liberation Sans">1</text></svg>
          <div class="show"></div>
        </div>
      </div>
      <div class="edge"></div>
    `;
  }

  private pin(name: string, run: boolean, icon: unknown) {
    return html`<button class=${classMap({ pin: true, run })} aria-label=${name}><svg width="24" height="24" viewBox="0 0 24 24">${icon}</svg></button>`;
  }
}
